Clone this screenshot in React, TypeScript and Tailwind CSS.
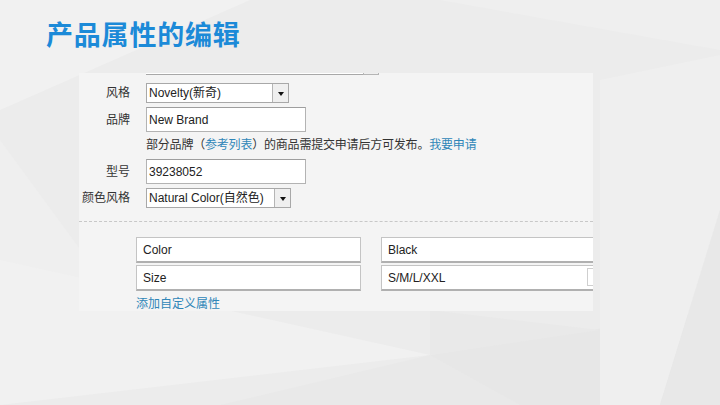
import React from "react";

const font = { fontFamily: '"Liberation Sans", "Noto Sans CJK SC", sans-serif' };

function Select({ value, width }: { value: string; width: string }) {
  return (
    <div className={`flex h-[20px] ${width} border border-[#a8a8a8] bg-white`}>
      <div className="flex-1 flex items-center pl-[2px] text-[12px] text-[#222] leading-none">{value}</div>
      <div className="w-[16px] border-l border-[#b5b5b5] bg-[#efefef] flex items-center justify-center">
        <div className="w-0 h-0 border-l-[3px] border-r-[3px] border-t-[4px] border-l-transparent border-r-transparent border-t-[#111] mt-[2px]" />
      </div>
    </div>
  );
}

function Input({ value, width }: { value: string; width: string }) {
  return (
    <div className={`h-[25px] ${width} border border-[#b3b3b3] border-t-[#9e9e9e] bg-white flex items-center pl-[2px] text-[12px] text-[#222]`}>
      {value}
    </div>
  );
}

function AttrInput({ value, width, extra }: { value: string; width: string; extra?: boolean }) {
  return (
    <div className={`relative h-[26px] ${width} shrink-0 border border-[#c4c4c4] border-b-2 border-b-[#b0b0b0] bg-white flex items-center pl-[6px] text-[12px] text-[#222]`}>
      {value}
      {extra && <div className="absolute left-[205px] top-[2px] w-[10px] h-[18px] border border-[#cfcfcf] bg-white" />}
    </div>
  );
}

function Row({ label, children }: { label: string; children: React.ReactNode }) {
  return (
    <div className="flex items-center">
      <div className="w-[51px] text-right text-[12px] text-[#333] leading-none">{label}</div>
      <div className="ml-[16px]">{children}</div>
    </div>
  );
}

export default function App() {
  return (
    <div className="relative w-[720px] h-[405px] overflow-hidden bg-[#ececec]" style={font}>
      <svg className="absolute inset-0" width="720" height="405" viewBox="0 0 720 405">
        <polygon points="0,0 720,0 720,50 440,0" fill="#efefef" />
        <polygon points="0,0 250,0 0,110" fill="#f1f1f1" />
        <polygon points="0,140 110,290 0,405" fill="#efefef" />
        <polygon points="0,260 430,355 0,405" fill="#f1f1f1" />
        <polygon points="430,355 720,310 720,405 400,405" fill="#e7e7e7" />
        <polygon points="220,405 430,355 520,405" fill="#e9e9e9" />
        <polygon points="600,80 720,55 720,210 660,405 600,405" fill="#efefef" />
        <polygon points="660,405 720,210 720,405" fill="#e8e8e8" />
        <polygon points="430,310 600,330 430,355" fill="#e9e9e9" />
      </svg>

      <div className="relative">
        <div className="pl-[46px] pt-[21px] text-[27px] font-bold leading-[30px] text-[#1c8ad8] tracking-[0.8px]">
          产品属性的编辑
        </div>

        <div className="ml-[79px] mt-[22px] w-[514px] h-[238px] overflow-hidden bg-[#f4f4f4]">
          <div className="ml-[67px] flex h-[2px] w-[233px]">
            <div className="flex-1 border-b border-[#a8a8a8] bg-white" />
            <div className="w-[16px] border-b border-l border-r border-[#b5b5b5] bg-[#efefef]" />
          </div>

          <div className="mt-[8px] flex flex-col">
            <Row label="风格">
              <Select value="Novelty(新奇)" width="w-[143px]" />
            </Row>
            <div className="mt-[4px]">
              <Row label="品牌">
                <Input value="New Brand" width="w-[160px]" />
              </Row>
            </div>
            <div className="ml-[67px] mt-[4px] h-[18px] flex items-center text-[12px] text-[#333] whitespace-nowrap tracking-[-0.2px]">
              部分品牌（<span className="text-[#2f86b8]">参考列表</span>）的商品需提交申请后方可发布。<span className="text-[#2f86b8]">我要申请</span>
            </div>
            <div className="mt-[5px]">
              <Row label="型号">
                <Input value="39238052" width="w-[160px]" />
              </Row>
            </div>
            <div className="mt-[4px]">
              <Row label="颜色风格">
                <Select value="Natural Color(自然色)" width="w-[145px]" />
              </Row>
            </div>
          </div>

          <div className="mt-[13px] border-t border-dashed border-[#c8c8c8]" />

          <div className="mt-[15px] ml-[57px] flex flex-col gap-[2px]">
            <div className="flex gap-[20px]">
              <AttrInput value="Color" width="w-[225px]" />
              <AttrInput value="Black" width="w-[230px]" />
            </div>
            <div className="flex gap-[20px]">
              <AttrInput value="Size" width="w-[225px]" />
              <AttrInput value="S/M/L/XXL" width="w-[230px]" extra />
            </div>
            <div className="mt-[3px] text-[12px] leading-[16px] text-[#2f86b8]">添加自定义属性</div>
          </div>
        </div>
      </div>
    </div>
  );
}
